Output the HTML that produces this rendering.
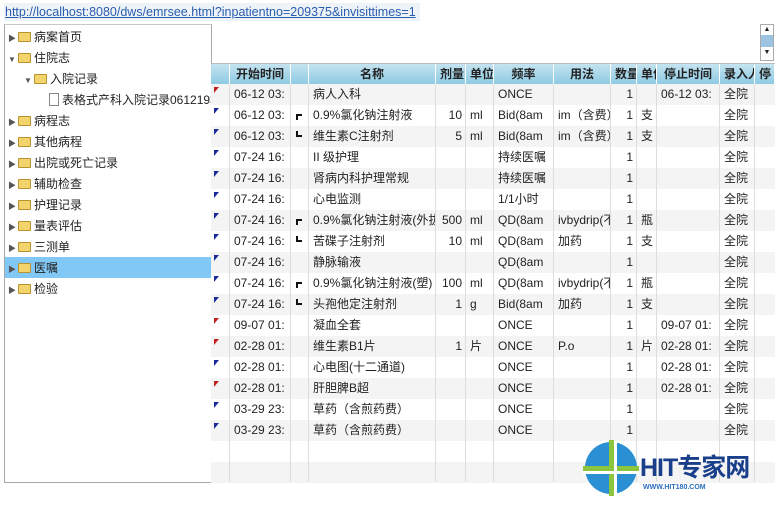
<!DOCTYPE html>
<html><head><meta charset="utf-8"><style>
*{margin:0;padding:0;box-sizing:border-box}
body{width:775px;height:509px;background:#fff;font-family:"Liberation Sans","Noto Sans CJK SC",sans-serif;font-size:12px;color:#222;position:relative;overflow:hidden}
.url{position:absolute;left:4px;top:3px;width:416px;height:18px;font-size:12.5px;color:#2a5db0;text-decoration:underline;background:#eef3f8;line-height:18px;padding-left:1px;white-space:nowrap;overflow:hidden}
.left{position:absolute;left:4px;top:24px;width:208px;height:459px;border:1px solid #a8a8a8;border-top:1px solid #c8c8c8;overflow:hidden}
.ti{position:absolute;height:20px;line-height:20px;white-space:nowrap;font-size:12px}
.arr{display:inline-block;width:10px;font-size:8px;color:#555}
.fold{display:inline-block;width:13px;height:10px;background:#f3d36b;border:1px solid #b99330;border-radius:1px;vertical-align:-1px;margin-right:3px}
.doc{display:inline-block;width:10px;height:13px;border:1px solid #888;background:#fff;vertical-align:-2px;margin-right:3px}
.sel{position:absolute;left:0;top:232px;width:207px;height:21px;background:#82c8f6}
.grid{position:absolute;left:211px;top:63px;width:564px;height:420px;border-bottom:1px solid #a8a8a8}
.hdr{position:absolute;left:0;top:0;height:21px;width:564px;background:linear-gradient(#c4e4f1,#8ecae3);border-top:1px solid #bbb}
.cell{position:absolute;height:21px;line-height:21px;white-space:nowrap;overflow:hidden;padding:0 4px}
.h{font-weight:bold;text-align:center;color:#222;border-right:1px solid #fff}
.row{position:absolute;left:0;width:564px;height:21px}
.vl{position:absolute;top:21px;bottom:0;width:1px;background:#ddd}
.r{text-align:right}
.mk{position:absolute;left:3px;top:3px;width:0;height:0;border-top:6px solid #1a2a9a;border-right:5px solid transparent}
.mk.red{border-top-color:#c02020}
.br{position:absolute;left:85px;width:6px;height:6px}
.sb{position:absolute;left:760px;top:24px;width:14px;height:37px;border:1px solid #aaa;background:#fff}
</style></head><body>
<div class="url">http://localhost:8080/dws/emrsee.html?inpatientno=209375&amp;invisittimes=1</div>
<div class="left">
<div class="sel"></div>
<div class="ti" style="left:3px;top:2px"><span class="arr">▶</span><span class="fold"></span>病案首页</div>
<div class="ti" style="left:3px;top:23px"><span class="arr">▼</span><span class="fold"></span>住院志</div>
<div class="ti" style="left:19px;top:44px"><span class="arr">▼</span><span class="fold"></span>入院记录</div>
<div class="ti" style="left:44px;top:65px"><span class="doc"></span>表格式产科入院记录06121936</div>
<div class="ti" style="left:3px;top:86px"><span class="arr">▶</span><span class="fold"></span>病程志</div>
<div class="ti" style="left:3px;top:107px"><span class="arr">▶</span><span class="fold"></span>其他病程</div>
<div class="ti" style="left:3px;top:128px"><span class="arr">▶</span><span class="fold"></span>出院或死亡记录</div>
<div class="ti" style="left:3px;top:149px"><span class="arr">▶</span><span class="fold"></span>辅助检查</div>
<div class="ti" style="left:3px;top:170px"><span class="arr">▶</span><span class="fold"></span>护理记录</div>
<div class="ti" style="left:3px;top:191px"><span class="arr">▶</span><span class="fold"></span>量表评估</div>
<div class="ti" style="left:3px;top:212px"><span class="arr">▶</span><span class="fold"></span>三测单</div>
<div class="ti" style="left:3px;top:233px"><span class="arr">▶</span><span class="fold"></span>医嘱</div>
<div class="ti" style="left:3px;top:254px"><span class="arr">▶</span><span class="fold"></span>检验</div>
</div>
<div class="sb"><div style="font-size:7px;text-align:center;line-height:10px">▲</div><div style="height:12px;background:#9cc3e0"></div><div style="font-size:7px;text-align:center;line-height:12px">▼</div></div>
<div class="grid" id="g"></div>
<div style="position:absolute;left:585px;top:442px;width:52px;height:52px;border-radius:50%;background:#2b8fd3"></div>
<div style="position:absolute;left:609px;top:440px;width:5px;height:56px;background:#8cc63e"></div>
<div style="position:absolute;left:583px;top:466px;width:56px;height:5px;background:#8cc63e"></div>
<div style="position:absolute;left:614px;top:442px;width:3px;height:52px;background:#fff"></div>
<div style="position:absolute;left:583px;top:471px;width:56px;height:3px;background:#fff"></div>
<div style="position:absolute;left:640px;top:455px;font-size:25px;font-weight:bold;color:#1a3f8a;letter-spacing:-1px;line-height:26px">HIT专家网</div>
<div style="position:absolute;left:643px;top:484px;font-size:7px;font-weight:bold;color:#2b6fc0">WWW.HIT180.COM</div>
<script>
var cols=[[0,19,''],[19,61,'开始时间'],[80,18,''],[98,127,'名称'],[225,30,'剂量'],[255,28,'单位'],[283,60,'频率'],[343,57,'用法'],[400,26,'数量'],[426,20,'单位'],[446,63,'停止时间'],[509,35,'录入人'],[544,20,'停']];
var rows=[
['r','06-12 03:','','病人入科','','','ONCE','','1','','06-12 03:','全院'],
['b','06-12 03:','t','0.9%氯化钠注射液','10','ml','Bid(8am','im（含费）','1','支','','全院'],
['b','06-12 03:','e','维生素C注射剂','5','ml','Bid(8am','im（含费）','1','支','','全院'],
['b','07-24 16:','','II 级护理','','','持续医嘱','','1','','','全院'],
['b','07-24 16:','','肾病内科护理常规','','','持续医嘱','','1','','','全院'],
['b','07-24 16:','','心电监测','','','1/1小时','','1','','','全院'],
['b','07-24 16:','t','0.9%氯化钠注射液(外拔','500','ml','QD(8am','ivbydrip(不含','1','瓶','','全院'],
['b','07-24 16:','e','苦碟子注射剂','10','ml','QD(8am','加药','1','支','','全院'],
['b','07-24 16:','','静脉输液','','','QD(8am','','1','','','全院'],
['b','07-24 16:','t','0.9%氯化钠注射液(塑)','100','ml','QD(8am','ivbydrip(不含','1','瓶','','全院'],
['b','07-24 16:','e','头孢他定注射剂','1','g','Bid(8am','加药','1','支','','全院'],
['r','09-07 01:','','凝血全套','','','ONCE','','1','','09-07 01:','全院'],
['r','02-28 01:','','维生素B1片','1','片','ONCE','P.o','1','片','02-28 01:','全院'],
['b','02-28 01:','','心电图(十二通道)','','','ONCE','','1','','02-28 01:','全院'],
['r','02-28 01:','','肝胆脾B超','','','ONCE','','1','','02-28 01:','全院'],
['b','03-29 23:','','草药（含煎药费）','','','ONCE','','1','','','全院'],
['b','03-29 23:','','草药（含煎药费）','','','ONCE','','1','','','全院'],
0,0];
var h='<div class="hdr">';
cols.forEach(function(c){h+='<div class="cell h" style="left:'+c[0]+'px;width:'+c[1]+'px">'+c[2]+'</div>'});
h+='</div>';
rows.forEach(function(r,i){
var y=21+i*21;
h+='<div class="row" style="top:'+y+'px;background:'+(i%2?'#fff':'#f4f4f4')+'">';
if(r){
h+='<div class="mk'+(r[0]=='r'?' red':'')+'"></div>';
if(r[2]=='t')h+='<div class="br" style="border-left:2px solid #111;border-top:2px solid #111;top:9px"></div>';
if(r[2]=='e')h+='<div class="br" style="border-left:2px solid #111;border-bottom:2px solid #111;top:5px"></div>';
var m=[[1,1],[3,3],[4,4,1],[5,5],[6,6],[7,7],[8,8,1],[9,9],[10,10],[11,11]];
m.forEach(function(k){var c=cols[k[0]];h+='<div class="cell'+(k[2]?' r':'')+'" style="left:'+c[0]+'px;width:'+c[1]+'px">'+r[k[1]]+'</div>'});
}
h+='</div>';
});
cols.forEach(function(c,i){if(i)h+='<div class="vl" style="left:'+(c[0]-1)+'px"></div>'});
document.getElementById('g').innerHTML=h;
</script>
</body></html>
